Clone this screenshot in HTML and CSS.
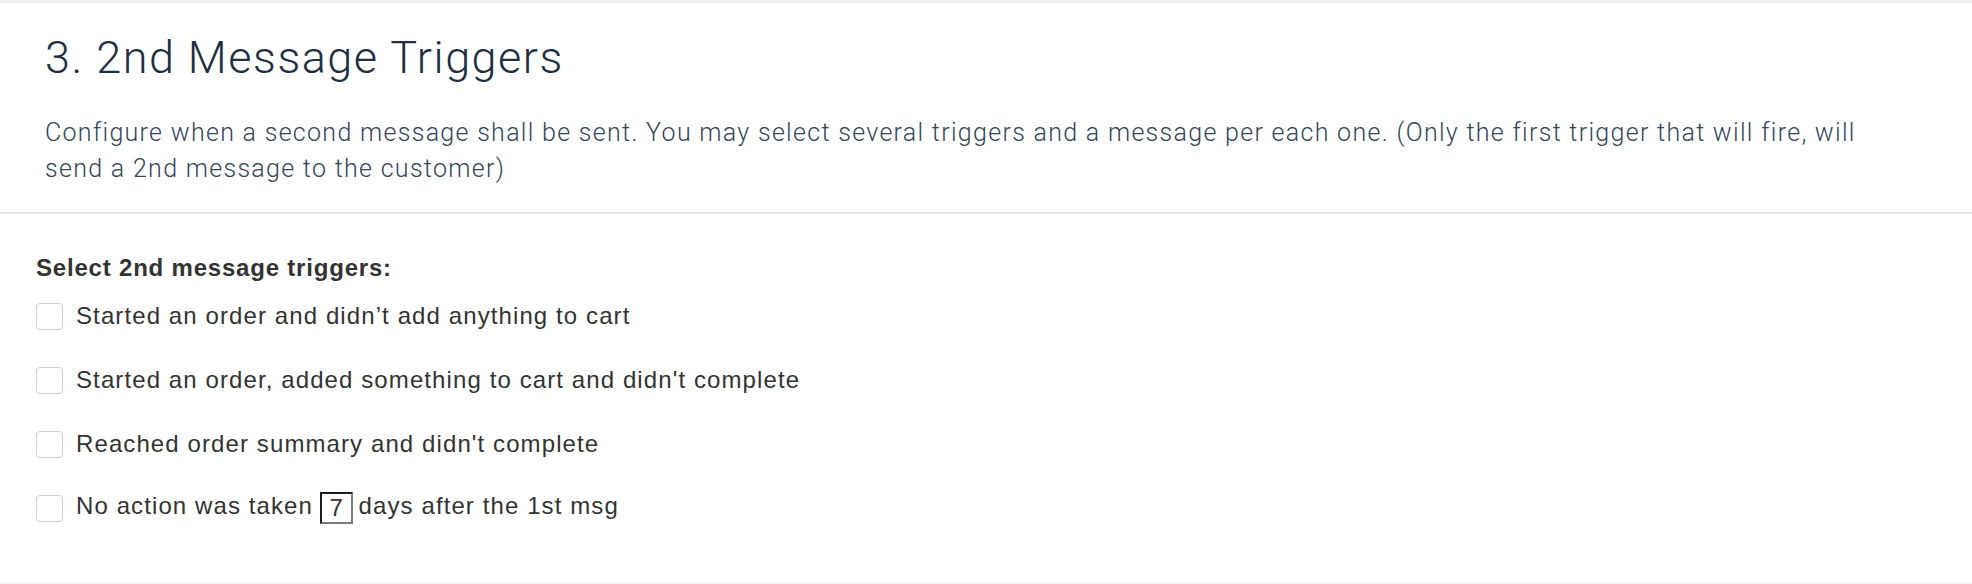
FILE: index.html
```html
<!DOCTYPE html>
<html lang="en">
<head>
    <meta charset="UTF-8">
    <meta name="viewport" content="width=device-width, initial-scale=1.0">
    <title>2nd Message Triggers</title>
    <link rel="stylesheet" href="styles.css">
</head>
<body>
    <div class="card">
        <div class="card-header">
            <h2 class="card-title">3. 2nd Message Triggers</h2>
            <p class="card-desc">Configure when a second message shall be sent. You may select several triggers and a message per each one. (Only the first trigger that will fire, will send a 2nd message to the customer)</p>
        </div>

        <div class="triggers">
            <p class="triggers-title">Select 2nd message triggers:</p>

            <label class="option">
                <input type="checkbox" class="check">
                <span>Started an order and didn’t add anything to cart</span>
            </label>
            <label class="option">
                <input type="checkbox" class="check">
                <span>Started an order, added something to cart and didn't complete</span>
            </label>
            <label class="option">
                <input type="checkbox" class="check">
                <span>Reached order summary and didn't complete</span>
            </label>
            <label class="option">
                <input type="checkbox" class="check">
                <span>No action was taken <input type="text" class="days" value="7"> days after the 1st msg</span>
            </label>
        </div>
    </div>
</body>
</html>
```

FILE: styles.css
```css
body {
    margin: 0;
    padding: 3px 0 2px;
    background-color: #efefef;
}

.card {
    background-color: #fff;
}

.card-header {
    padding: 28px 70px 25px 45px;
    border-bottom: 2px solid #e4e4e4;
}

.card-title {
    margin: 0 0 30px;
    font-family: Roboto, sans-serif;
    font-weight: 300;
    font-size: 45px;
    line-height: 54px;
    letter-spacing: 1.5px;
    color: #1f2f42;
}

.card-desc {
    margin: 0;
    font-family: Roboto, sans-serif;
    font-weight: 300;
    font-size: 25px;
    line-height: 36px;
    letter-spacing: 1.3px;
    color: #34465a;
}

.triggers {
    padding: 39px 36px 59px;
    font-family: 'Liberation Sans', Arial, sans-serif;
    color: #333;
}

.triggers-title {
    margin: 0 0 17px;
    font-size: 24px;
    line-height: 30px;
    font-weight: bold;
    letter-spacing: 0.8px;
}

.option {
    display: flex;
    align-items: center;
    height: 32px;
    margin-bottom: 32px;
    font-size: 24px;
    letter-spacing: 1.1px;
}

.option:last-child {
    margin-bottom: 0;
}

.check {
    appearance: none;
    -webkit-appearance: none;
    width: 27px;
    height: 27px;
    margin: 0 13px 0 0;
    border: 1px solid #cfcfcf;
    border-radius: 4px;
    background-color: #fff;
}

.days {
    box-sizing: border-box;
    width: 33px;
    height: 32px;
    margin: 0 -2px 0 -1px;
    padding: 0;
    border: 2px solid;
    border-color: #1c1c1c #7a7a7a #7a7a7a #1c1c1c;
    font-family: 'Liberation Sans', Arial, sans-serif;
    font-size: 24px;
    color: #333;
    text-align: center;
    vertical-align: middle;
}
```
